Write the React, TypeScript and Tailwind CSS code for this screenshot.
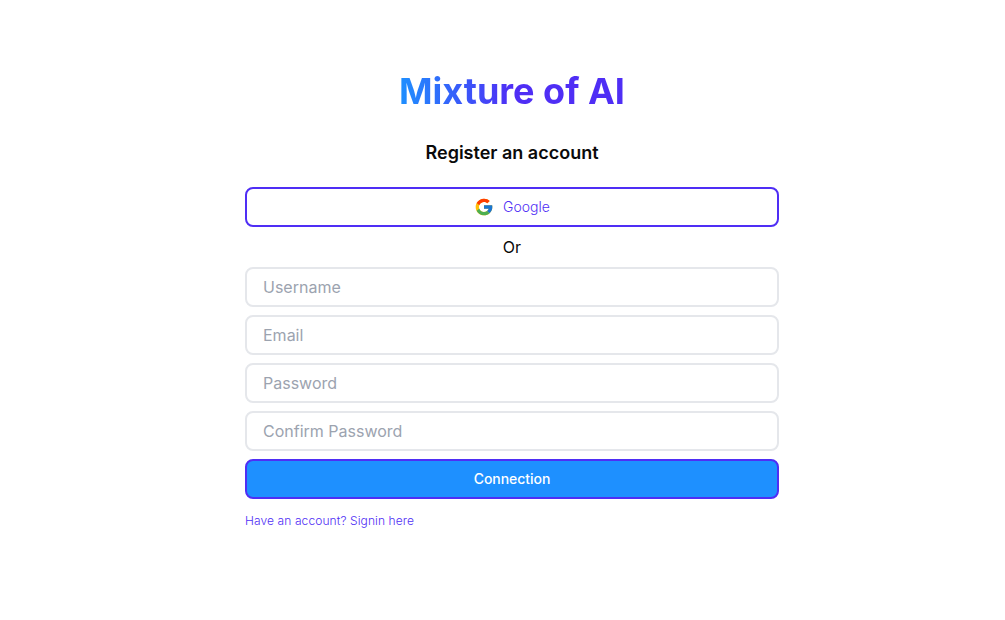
import type { FormEvent } from "react";
import { FcGoogle } from "react-icons/fc";

const fields = [
  { name: "username", type: "text", placeholder: "Username" },
  { name: "email", type: "email", placeholder: "Email" },
  { name: "password", type: "password", placeholder: "Password" },
  { name: "confirm", type: "password", placeholder: "Confirm Password" },
];

export default function App() {
  const handleSubmit = (e: FormEvent<HTMLFormElement>) => {
    e.preventDefault();
  };

  return (
    <main className="min-h-screen bg-white pt-[67px] pl-[245px] font-['Inter',sans-serif] text-[#0a0a0a]">
      <div className="flex w-[534px] flex-col">
        <h1 className="mx-auto w-fit bg-[linear-gradient(to_right,#1e90ff,#4f2ef5_50%)] bg-clip-text text-4xl leading-12 font-bold text-transparent">
          Mixture of AI
        </h1>
        <h2 className="mt-6 text-center text-lg leading-7 font-semibold">
          Register an account
        </h2>
        <button
          type="button"
          className="mt-5 flex h-10 items-center justify-center gap-[9px] rounded-lg border-2 border-[#4f2ef5] text-sm font-light text-[#4f2ef5]"
        >
          <FcGoogle size={20} />
          Google
        </button>
        <p className="my-2 text-center leading-6">Or</p>
        <form onSubmit={handleSubmit} className="flex flex-col gap-2">
          {fields.map((field) => (
            <input
              key={field.name}
              name={field.name}
              type={field.type}
              placeholder={field.placeholder}
              className="h-10 rounded-lg border-2 border-[#e5e7eb] px-4 text-base placeholder:text-[#9ca3af]"
            />
          ))}
          <button
            type="submit"
            className="h-10 rounded-lg border-2 border-[#4f2ef5] bg-[#1e90ff] text-sm font-medium tracking-[-0.05px] text-white"
          >
            Connection
          </button>
        </form>
        <a
          href="#"
          className="mt-3.5 w-fit text-xs leading-4 font-light tracking-[0.1px] text-[#4f2ef5]"
        >
          Have an account? Signin here
        </a>
      </div>
    </main>
  );
}
